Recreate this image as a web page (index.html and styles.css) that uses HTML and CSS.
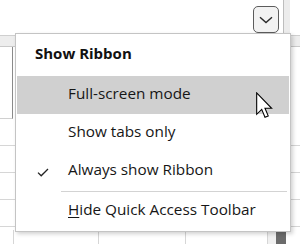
FILE: index.html
```html
<!DOCTYPE html>
<html>
<head>
<meta charset="utf-8">
<link rel="stylesheet" href="styles.css">
</head>
<body>
<div class="app">
  <div class="ribbon">
    <div class="spacer"></div>
    <button class="collapse" aria-label="Ribbon display options">
      <svg width="14" height="8" viewBox="0 0 14 8"><path d="M1 1.2 L7 6.5 L13 1.2" fill="none" stroke="#2a2a2a" stroke-width="1.4"/></svg>
    </button>
    <div class="rstrip"></div>
    <div class="rwhite"></div>
  </div>
  <div class="sheet">
    <div class="gap"></div>
    <div class="colhead"></div>
    <div class="fbar"></div>
    <div class="row"></div>
    <div class="row"></div>
    <div class="row"></div>
    <div class="row"></div>
    <div class="cells">
      <div class="c c1"></div>
      <div class="c c2"></div>
      <div class="c c3"></div>
      <div class="c c4"></div>
      <div class="c c5"></div>
      <div class="c c6"></div>
      <div class="c c7"></div>
    </div>
  </div>

  <div class="menu">
    <div class="mhead">Show Ribbon</div>
    <div class="item hover"><span class="chk"></span><span class="lbl">Full-screen mode</span></div>
    <div class="item"><span class="chk"></span><span class="lbl">Show tabs only</span></div>
    <div class="item"><span class="chk"><svg width="12" height="9" viewBox="0 0 12 9"><path d="M1 4.6 L4.2 7.8 L11 1" fill="none" stroke="#222" stroke-width="1.3"/></svg></span><span class="lbl">Always show Ribbon</span></div>
    <div class="sep"></div>
    <div class="item"><span class="chk"></span><span class="lbl"><u>H</u>ide Quick Access Toolbar</span></div>
  </div>

  <svg class="cursor" width="17" height="27" viewBox="0 0 12.5 19.5"><path d="M0.5 0.5 L0.5 16.2 L4.2 12.6 L6.6 18.4 L9 17.4 L6.6 11.8 L11.5 11.8 Z" fill="#fff" stroke="#000" stroke-width="0.8" stroke-linejoin="miter"/></svg>
</div>
</body>
</html>
```
FILE: styles.css
```css
* { box-sizing: border-box; }
html, body { margin: 0; padding: 0; background: #fff; }
body { width: 300px; height: 244px; overflow: hidden; font-family: "Open Sans", "Noto Sans", sans-serif; }
.app { position: relative; width: 300px; height: 244px; }

.ribbon { display: flex; height: 33px; align-items: flex-start; }
.spacer { flex: 1; }
.collapse {
  margin-top: 6px; margin-right: 4px;
  width: 26px; height: 27px; padding: 0;
  border: 1.5px solid #5c5c5c; border-radius: 5px;
  background: #f2f2f2;
  display: flex; align-items: center; justify-content: center;
}
.collapse svg { display: block; margin-top: 1px; }
.rstrip { width: 7px; height: 33px; background: #ececec; border-left: 1px solid #bdbdbd; }
.rwhite { width: 10px; height: 33px; background: #fff; }

.sheet { display: flex; flex-direction: column; }
.gap { height: 3px; border-bottom: 1px solid #cfcfcf; }
.colhead { height: 11px; background: #ededed; border-bottom: 1px solid #c9c9c9; }
.fbar { height: 72px; border-bottom: 1px solid #d0d0d0; width: 13px; border-right: 1px solid #8a8a8a; }
.row { height: 27px; border-bottom: 1px solid #d6d6d6; }
.cells { display: flex; height: 20px; margin-top: 3px; }
.c { height: 100%; border-right: 1px solid #d6d6d6; }
.c1 { width: 14px; }
.c2 { width: 85px; }
.c3 { width: 87px; }
.c4 { width: 82px; }
.c5 { width: 8px; background: #f0f0f0; border-right: none; }
.c6 { width: 10px; background: #6b6b6b; border-right: none; }
.c7 { flex: 1; border-right: none; }

.menu {
  position: absolute; left: 15px; top: 33px; width: 276px; height: 199px;
  background: #fff; border: 1px solid #c4c4c4;
  box-shadow: 2px 2px 4px rgba(0,0,0,0.18);
  padding: 0 1px;
  display: flex; flex-direction: column;
  color: #161616; font-size: 15.3px;
}
.mhead { height: 42px; padding-left: 18px; padding-bottom: 4px; font-weight: 700; font-size: 15px; color: #111; display: flex; align-items: center; }
.item { height: 38px; display: flex; align-items: center; }
.item.hover { background: #d0d0d0; }
.chk { width: 51px; display: flex; justify-content: center; padding-top: 2px; }
.chk svg { display: block; margin-left: 1px; }
.lbl { white-space: nowrap; position: relative; top: -2px; }
.lbl u { text-decoration-thickness: 1px; text-underline-offset: 2px; }
.sep { height: 1px; background: #d3d3d3; margin: 1px 2px 0 44px; }

.cursor { position: absolute; left: 256px; top: 92px; }
```
